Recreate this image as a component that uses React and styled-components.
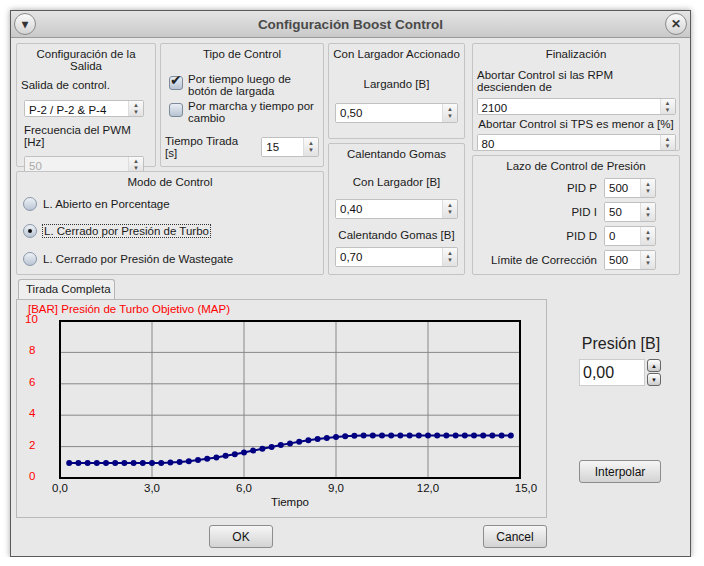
import React from "react";
import styled, { createGlobalStyle } from "styled-components";

const G = createGlobalStyle`
  body { margin:0; background:#fff; font-family:"Liberation Sans",Arial,sans-serif; }
`;
const Win = styled.div`
  position:relative; margin:10px 0 0 10px; width:679px; height:545px;
  border:1px solid #5a5a5a; background:#e8e8e8; box-shadow:0 0 6px rgba(0,0,0,.35);
  display:flex; flex-direction:column; font-size:11.5px; color:#1a1a1a;
`;
const Title = styled.div`
  height:26px; border-bottom:1px solid #9a9a9a; display:flex; align-items:center; justify-content:space-between;
  padding:0 3px; background:linear-gradient(#e4e4e4,#c9c9c9);
  font-weight:bold; font-size:13.5px; color:#4a4a4a;
`;
const Circle = styled.div`
  width:20px; height:20px; border-radius:50%; border:1px solid #8a8a8a;
  background:linear-gradient(#fafafa,#d4d4d4); display:flex; align-items:center; justify-content:center;
  font-size:12px; color:#333; font-weight:bold;
`;
const Body = styled.div`padding:5px 5px 0 5px; display:flex; flex-direction:column;`;
const Top = styled.div`display:flex; gap:4px;`;
const Col = styled.div`display:flex; flex-direction:column; gap:4px; width:${p=>p.w}px;`;
const Row = styled.div`display:flex; gap:4px;`;
const Panel = styled.div`
  border:1px solid #c4c4c4; border-radius:2px; background:#e9e9e9; height:${p=>p.h}px;
  width:${p=>p.w ? p.w+"px" : "auto"}; box-sizing:border-box; padding:4px 4px;
  display:flex; flex-direction:column; align-items:${p=>p.left?"stretch":"center"};
`;
const PTitle = styled.div`text-align:center; margin-bottom:${p=>p.mb||6}px;`;
const Lbl = styled.div`margin:${p=>p.m||"0"}; text-align:left;`;
const Spin = styled.div`
  display:flex; width:${p=>p.w}px; height:${p=>p.h||20}px; border:1px solid #c0c0c0; border-radius:2px;
  background:#fff; box-sizing:border-box; margin:${p=>p.m||"0"};
`;
const SpinVal = styled.div`flex:1; padding:3px 4px 0; color:${p=>p.dis?"#aaa":"#111"}; background:${p=>p.dis?"#f2f2f2":"#fff"};`;
const SpinBtn = styled.div`
  width:14px; border-left:1px solid #ddd; display:flex; flex-direction:column; justify-content:center; align-items:center;
  background:linear-gradient(#fafafa,#e2e2e2); font-size:6px; color:#555; line-height:7px;
`;
const SpinBox = ({ w, v, dis, m, h }) => (
  <Spin w={w} m={m} h={h}><SpinVal dis={dis}>{v}</SpinVal><SpinBtn><span>▲</span><span>▼</span></SpinBtn></Spin>
);
const Check = styled.div`display:flex; gap:5px; align-items:flex-start; margin:${p=>p.m};`;
const Box = styled.div`
  width:12px; height:12px; margin-top:3px; border:1px solid #7d8a9a; border-radius:3px; flex:none;
  background:linear-gradient(#e9eef5,#b8c3d2); position:relative;
`;
const Tick = styled.span`position:absolute; left:0; top:-5px; font-size:14px; color:#222;`;
const Radio = styled.div`display:flex; align-items:center; gap:6px; margin:${p=>p.m};`;
const RDot = styled.div`
  width:12px; height:12px; border-radius:50%; border:1px solid #8a97a8; background:linear-gradient(#eef2f7,#b9c4d3);
  display:flex; align-items:center; justify-content:center;
`;
const Inner = styled.div`width:4px; height:4px; border-radius:50%; background:#111;`;
const Focus = styled.span`outline:1px dotted #333; padding:0 1px;`;
const PidRow = styled.div`display:flex; justify-content:flex-end; align-items:center; gap:7px; padding-right:19px; margin-bottom:4px;`;
const Bottom = styled.div`display:flex; margin-top:4px;`;
const TabArea = styled.div`width:531px; display:flex; flex-direction:column;`;
const Tab = styled.div`
  align-self:flex-start; margin-left:2px; width:97px; height:20px; box-sizing:border-box;
  border:1px solid #b5b5b5; border-bottom:none; border-radius:3px 3px 0 0; background:#efefef;
  padding:3px 0 0 7px;
`;
const Pane = styled.div`height:219px; border:1px solid #b9b9b9; box-sizing:border-box; background:#e8e8e8; padding:3px 0 0 4px;`;
const ChartTitle = styled.div`color:#f00; margin-left:7px;`;
const Side = styled.div`flex:1; display:flex; flex-direction:column; align-items:center; padding-top:56px;`;
const Big = styled.div`font-size:16px; color:#222; margin-left:10px;`;
const PSpin = styled.div`display:flex; gap:2px; margin:6px 0 0 8px; align-items:center;`;
const PVal = styled.div`width:66px; height:27px; box-sizing:border-box; border:1px solid #ccc; background:#fff; font-size:16px; padding:4px 3px;`;
const PBtns = styled.div`display:flex; flex-direction:column; gap:1px;`;
const PB = styled.div`width:12px; height:11px; border:1px solid #666; border-radius:3px; background:linear-gradient(#fff,#ccc); font-size:6px; display:flex; align-items:center; justify-content:center;`;
const Btn = styled.button`
  width:${p=>p.w}px; height:23px; border:1px solid #8d8d8d; border-radius:3px; font:12px "Liberation Sans",Arial,sans-serif; color:#111;
  background:linear-gradient(#f6f6f6,#d3d3d3); margin:${p=>p.m||0};
`;
const Footer = styled.div`display:flex; padding:7px 0 0 193px;`;

function Chart() {
  const X = (t) => 39 + (t / 15) * 460;
  const Y = (v) => 6 + (10 - v) * 15.7;
  const f = (t) => t <= 3 ? 0.95 : t >= 10 ? 2.7 : 0.95 + 1.75 * (0.5 - 0.5 * Math.cos(Math.PI * (t - 3) / 7));
  const pts = [];
  for (let i = 1; i <= 49; i++) { const t = i * 0.3; pts.push([X(t), Y(f(t))]); }
  const gx = [3, 6, 9, 12], gy = [2, 4, 6, 8];
  return (
    <svg width="524" height="196" style={{ display: "block" }} fontFamily="Liberation Sans, Arial, sans-serif" fontSize="11.5">
      {[0,2,4,6,8,10].map(v => <text key={v} x={v===10?4:8} y={Y(v)+2} fill="#f00">{v}</text>)}
      {gx.map(t => <line key={t} x1={X(t)} x2={X(t)} y1={Y(10)} y2={Y(0)} stroke="#888" />)}
      {gy.map(v => <line key={v} x1={X(0)} x2={X(15)} y1={Y(v)} y2={Y(v)} stroke="#888" />)}
      <rect x={X(0)} y={Y(10)} width={X(15)-X(0)} height={Y(0)-Y(10)} fill="none" stroke="#000" strokeWidth="2" />
      <polyline points={pts.map(p => p.join(",")).join(" ")} fill="none" stroke="#000080" strokeWidth="2" />
      {pts.map((p, i) => <circle key={i} cx={p[0]} cy={p[1]} r="3" fill="#000080" />)}
      {[0,3,6,9,12,15].map(t => <text key={t} x={X(t)+(t===15?6:0)} y={Y(0)+14} textAnchor="middle" fill="#111">{t.toFixed(1).replace(".",",")}</text>)}
      <text x={X(7.5)} y={Y(0)+28} textAnchor="middle" fill="#111">Tiempo</text>
    </svg>
  );
}

export default function App() {
  return (
    <>
      <G />
      <Win>
        <Title><Circle>▾</Circle><span>Configuración Boost Control</span><Circle>✕</Circle></Title>
        <Body>
          <Top>
            <Col w={308}>
              <Row>
                <Panel w={140} h={124} left>
                  <PTitle mb={7}>Configuración de la Salida</PTitle>
                  <Lbl>Salida de control.</Lbl>
                  <SpinBox w={120} v="P-2 / P-2 & P-4" m="9px 0 0 3px" />
                  <Lbl m="7px 0 0 3px">Frecuencia del PWM [Hz]</Lbl>
                  <SpinBox w={120} v="50" dis m="8px 0 0 3px" />
                </Panel>
                <Panel w={164} h={124} left>
                  <PTitle mb={13}>Tipo de Control</PTitle>
                  <Check m="0 0 0 4px"><Box><Tick>✔</Tick></Box><span>Por tiempo luego de<br/>botón de largada</span></Check>
                  <Check m="3px 0 0 4px"><Box /><span>Por marcha y tiempo por<br/>cambio</span></Check>
                  <Row style={{ alignItems: "center", marginTop: 11 }}>
                    <span>Tiempo Tirada [s]</span><SpinBox w={59} v="15" m="0 0 0 6px" />
                  </Row>
                </Panel>
              </Row>
              <Panel h={104} left>
                <PTitle mb={9}>Modo de Control</PTitle>
                <Radio m="0 0 0 2px"><RDot /><span>L. Abierto en Porcentage</span></Radio>
                <Radio m="13px 0 0 2px"><RDot><Inner /></RDot><span><Focus>L. Cerrado por Presión de Turbo</Focus></span></Radio>
                <Radio m="14px 0 0 2px"><RDot /><span>L. Cerrado por Presión de Wastegate</span></Radio>
              </Panel>
            </Col>
            <Col w={137}>
              <Panel h={96}>
                <PTitle mb={18}>Con Largador Accionado</PTitle>
                <Lbl>Largando [B]</Lbl>
                <SpinBox w={123} v="0,50" m="13px 0 0 0" />
              </Panel>
              <Panel h={132}>
                <PTitle mb={16}>Calentando Gomas</PTitle>
                <Lbl>Con Largador [B]</Lbl>
                <SpinBox w={123} v="0,40" m="11px 0 0 0" />
                <Lbl m="10px 0 0 0">Calentando Gomas [B]</Lbl>
                <SpinBox w={123} v="0,70" m="6px 0 0 0" />
              </Panel>
            </Col>
            <Col w={208} style={{ marginLeft: 3 }}>
              <Panel h={108}>
                <PTitle mb={9}>Finalización</PTitle>
                <Lbl>Abortar Control si las RPM descienden de</Lbl>
                <SpinBox w={199} v="2100" m="5px 0 0 0" />
                <Lbl m="3px 0 0 0">Abortar Control si TPS es menor a [%]</Lbl>
                <SpinBox w={199} v="80" m="4px 0 0 0" />
              </Panel>
              <Panel h={120} left>
                <PTitle mb={6}>Lazo de Control de Presión</PTitle>
                <PidRow><span>PID P</span><SpinBox w={52} v="500" /></PidRow>
                <PidRow><span>PID I</span><SpinBox w={52} v="50" /></PidRow>
                <PidRow><span>PID D</span><SpinBox w={52} v="0" /></PidRow>
                <PidRow><span>Límite de Corrección</span><SpinBox w={52} v="500" /></PidRow>
              </Panel>
            </Col>
          </Top>
          <Bottom>
            <TabArea>
              <Tab>Tirada Completa</Tab>
              <Pane>
                <ChartTitle>[BAR] Presión de Turbo Objetivo (MAP)</ChartTitle>
                <Chart />
              </Pane>
            </TabArea>
            <Side>
              <Big>Presión [B]</Big>
              <PSpin><PVal>0,00</PVal><PBtns><PB>▲</PB><PB>▼</PB></PBtns></PSpin>
              <Btn w={82} m="74px 0 0 8px">Interpolar</Btn>
            </Side>
          </Bottom>
          <Footer>
            <Btn w={64}>OK</Btn>
            <Btn w={64} m="0 0 0 210px">Cancel</Btn>
          </Footer>
        </Body>
      </Win>
    </>
  );
}
